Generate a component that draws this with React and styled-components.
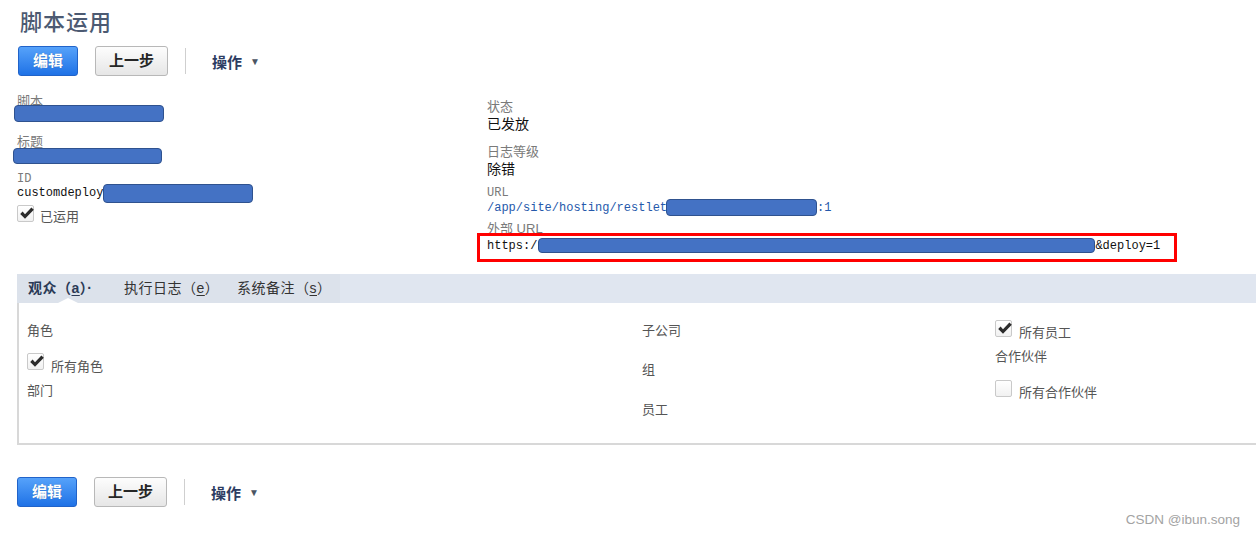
import React from "react"
import styled, { createGlobalStyle } from "styled-components"

const GlobalStyle = createGlobalStyle`
  html, body {
    margin: 0;
    padding: 0;
    background: #ffffff;
  }
  body {
    font-family: "Liberation Sans", "Noto Sans CJK SC", sans-serif;
    color: #222;
  }
`

const CJK = `"Liberation Sans", "Noto Sans CJK SC", sans-serif`
const MONO = `"Liberation Mono", "Noto Sans CJK SC", monospace`

const Page = styled.div`
  position: relative;
  width: 1256px;
  height: 536px;
  overflow: hidden;
  padding-top: 8px;
  box-sizing: border-box;
`

const Title = styled.h1`
  margin: 0 0 0 20px;
  font-family: ${CJK};
  font-size: 22px;
  font-weight: 500;
  line-height: 30px;
  letter-spacing: 1px;
  color: #4c5a72;
`

const Toolbar = styled.div`
  display: flex;
  align-items: center;
  height: 30px;
  margin-top: ${(p) => p.$mt}px;
  margin-left: ${(p) => p.$ml}px;
`

const Button = styled.button`
  height: 30px;
  box-sizing: border-box;
  padding: 0 ${(p) => (p.$primary ? 14 : 13)}px;
  border-radius: 3px;
  font-family: ${CJK};
  font-size: 15px;
  font-weight: bold;
  line-height: 28px;
  margin-right: 17px;
  cursor: pointer;
  border: 1px solid ${(p) => (p.$primary ? "#2163c9" : "#b8b8b8")};
  color: ${(p) => (p.$primary ? "#ffffff" : "#262626")};
  background: ${(p) =>
    p.$primary
      ? "linear-gradient(#56a2fa, #1f72e6)"
      : "linear-gradient(#fdfdfd, #e6e6e6)"};
  text-shadow: ${(p) => (p.$primary ? "0 0 1px rgba(0,0,0,0.3)" : "none")};
`

const Divider = styled.div`
  width: 1px;
  height: 26px;
  background: #cfcfcf;
  margin-right: 26px;
`

const Menu = styled.div`
  display: flex;
  align-items: center;
  font-family: ${CJK};
  font-size: 15px;
  font-weight: bold;
  color: #2d3d62;
`

const Caret = styled.span`
  margin-left: 8px;
  font-size: 10px;
  color: #4b5563;
`

const Fields = styled.div`
  display: grid;
  grid-template-columns: 470px 1fr;
  margin-top: 19px;
`

const Column = styled.div`
  display: flex;
  flex-direction: column;
  align-items: flex-start;
  padding-left: 17px;
  padding-top: ${(p) => p.$pt || 0}px;
`

const Label = styled.div`
  font-family: ${(p) => (p.$mono ? MONO : CJK)};
  font-size: ${(p) => (p.$mono ? 12 : 13)}px;
  line-height: 14px;
  color: #7a7a7a;
  margin-top: ${(p) => p.$mt || 0}px;
`

const Value = styled.div`
  font-family: ${CJK};
  font-size: 14px;
  line-height: 18px;
  color: #111;
  margin-top: ${(p) => p.$mt || 0}px;
`

const MonoRow = styled.div`
  display: flex;
  align-items: center;
  height: ${(p) => p.$h || 14}px;
  font-family: ${MONO};
  font-size: 12px;
  color: ${(p) => (p.$link ? "#2659ab" : "#111")};
  white-space: nowrap;
`

const Redact = styled.span`
  display: block;
  flex: none;
  box-sizing: border-box;
  width: ${(p) => p.$w}px;
  height: ${(p) => p.$h}px;
  margin-top: ${(p) => p.$mt || 0}px;
  margin-left: ${(p) => p.$ml || 0}px;
  background: #4472c4;
  border: 1.5px solid #2f528f;
  border-radius: 4px;
`

const Highlight = styled.div`
  display: flex;
  align-items: center;
  box-sizing: border-box;
  width: 700px;
  height: 29px;
  margin: -3px 0 0 -10px;
  padding: 0 0 4px 7px;
  border: 3px solid #ff0000;
`

const CheckRow = styled.div`
  display: flex;
  align-items: flex-start;
  margin-top: ${(p) => p.$mt || 0}px;
`

const Box = styled.span`
  display: block;
  width: 17px;
  height: 17px;
  box-sizing: border-box;
  border: 1px solid #c9c9c9;
  border-radius: 2px;
  background: linear-gradient(#ffffff, #f1f1f1);
  position: relative;
  svg {
    position: absolute;
    left: 1px;
    top: 0px;
  }
`

const CheckText = styled.span`
  font-family: ${CJK};
  font-size: 13px;
  line-height: 16px;
  color: #555;
  padding-top: ${(p) => p.$pt}px;
  margin-left: ${(p) => p.$gap || 6}px;
`

const Tabs = styled.section`
  margin: 12px 0 0 17px;
`

const TabBar = styled.div`
  display: flex;
  height: 29px;
  background: #e0e6f0;
`

const TabList = styled.div`
  display: flex;
  width: 323px;
  box-sizing: border-box;
  padding-left: 11px;
  background: #dce2eb;
`

const Tab = styled.div`
  position: relative;
  width: ${(p) => p.$w}px;
  font-family: ${CJK};
  font-size: 14px;
  line-height: 29px;
  letter-spacing: 0.5px;
  font-weight: ${(p) => (p.$active ? "bold" : "normal")};
  color: ${(p) => (p.$active ? "#2b3a56" : "#333")};
  white-space: nowrap;
  u {
    text-underline-offset: 2px;
  }
  &::after {
    content: "";
    display: ${(p) => (p.$active ? "block" : "none")};
    position: absolute;
    left: 30px;
    bottom: 0;
    border-left: 10px solid transparent;
    border-right: 10px solid transparent;
    border-bottom: 5px solid #ffffff;
  }
`

const Panel = styled.div`
  display: grid;
  grid-template-columns: 615px 353px 1fr;
  height: 140px;
  padding-left: 8px;
  border-left: 2px solid #d8d8d8;
  border-bottom: 2px solid #d8d8d8;
`

const PanelCol = styled.div`
  display: flex;
  flex-direction: column;
  align-items: flex-start;
`

const Item = styled.div`
  font-family: ${CJK};
  font-size: 13px;
  line-height: 16px;
  color: #555;
  margin-top: ${(p) => p.$mt || 0}px;
`

const Watermark = styled.div`
  position: absolute;
  right: 16px;
  bottom: 9px;
  font-family: "Liberation Sans", sans-serif;
  font-size: 13.5px;
  color: #a3a3a3;
`

const Tick = () => (
  <svg width="16" height="15" viewBox="0 0 16 15">
    <path d="M1.2 8 L3.6 5.6 L6 8.2 L12.4 1.4 L14.8 3.8 L6 12.8 Z" fill="#2b2b2b" />
  </svg>
)

const Checkbox = ({ checked, label, pt, mt, gap }) => (
  <CheckRow $mt={mt}>
    <Box>{checked && <Tick />}</Box>
    <CheckText $pt={pt} $gap={gap}>{label}</CheckText>
  </CheckRow>
)

const Actions = ({ mt, ml }) => (
  <Toolbar $mt={mt} $ml={ml}>
    <Button $primary>编辑</Button>
    <Button>上一步</Button>
    <Divider />
    <Menu>
      操作<Caret>▼</Caret>
    </Menu>
  </Toolbar>
)

export default function App() {
  return (
    <Page>
      <GlobalStyle />
      <Title>脚本运用</Title>
      <Actions mt={8} ml={18} />

      <Fields>
        <Column>
          <Label>脚本</Label>
          <Redact $w={150} $h={17} $mt={-4} $ml={-3} />
          <Label $mt={13}>标题</Label>
          <Redact $w={149} $h={16} $mt={-1} $ml={-4} />
          <Label $mono $mt={8}>ID</Label>
          <MonoRow>
            customdeploy
            <Redact $w={150} $h={19} />
          </MonoRow>
          <Checkbox checked label="已运用" mt={5} pt={4} gap={6} />
        </Column>

        <Column $pt={5}>
          <Label>状态</Label>
          <Value $mt={1}>已发放</Value>
          <Label $mt={12}>日志等级</Label>
          <Value $mt={1}>除错</Value>
          <Label $mono $mt={8}>URL</Label>
          <MonoRow $link $h={15}>
            /app/site/hosting/restlet
            <Redact $w={151} $h={17} $ml={-1} />
            :1
          </MonoRow>
          <Label $mt={7}>外部 URL</Label>
          <Highlight>
            <MonoRow>
              https:/
              <Redact $w={557} $h={15} $ml={1} />
              &amp;deploy=1
            </MonoRow>
          </Highlight>
        </Column>
      </Fields>

      <Tabs>
        <TabBar>
          <TabList>
            <Tab $active $w={96}>
              观众（<u>a</u>）·
            </Tab>
            <Tab $w={113}>
              执行日志（<u>e</u>）
            </Tab>
            <Tab $w={100}>
              系统备注（<u>s</u>）
            </Tab>
          </TabList>
        </TabBar>
        <Panel>
          <PanelCol>
            <Item $mt={20}>角色</Item>
            <Checkbox checked label="所有角色" mt={14} pt={6} gap={7} />
            <Item $mt={8}>部门</Item>
          </PanelCol>
          <PanelCol>
            <Item $mt={20}>子公司</Item>
            <Item $mt={23}>组</Item>
            <Item $mt={24}>员工</Item>
          </PanelCol>
          <PanelCol>
            <Checkbox checked label="所有员工" mt={17} pt={5} gap={7} />
            <Item $mt={8}>合作伙伴</Item>
            <Checkbox label="所有合作伙伴" mt={15} pt={5} gap={7} />
          </PanelCol>
        </Panel>
      </Tabs>

      <Actions mt={32} ml={17} />
      <Watermark>CSDN @ibun.song</Watermark>
    </Page>
  )
}
